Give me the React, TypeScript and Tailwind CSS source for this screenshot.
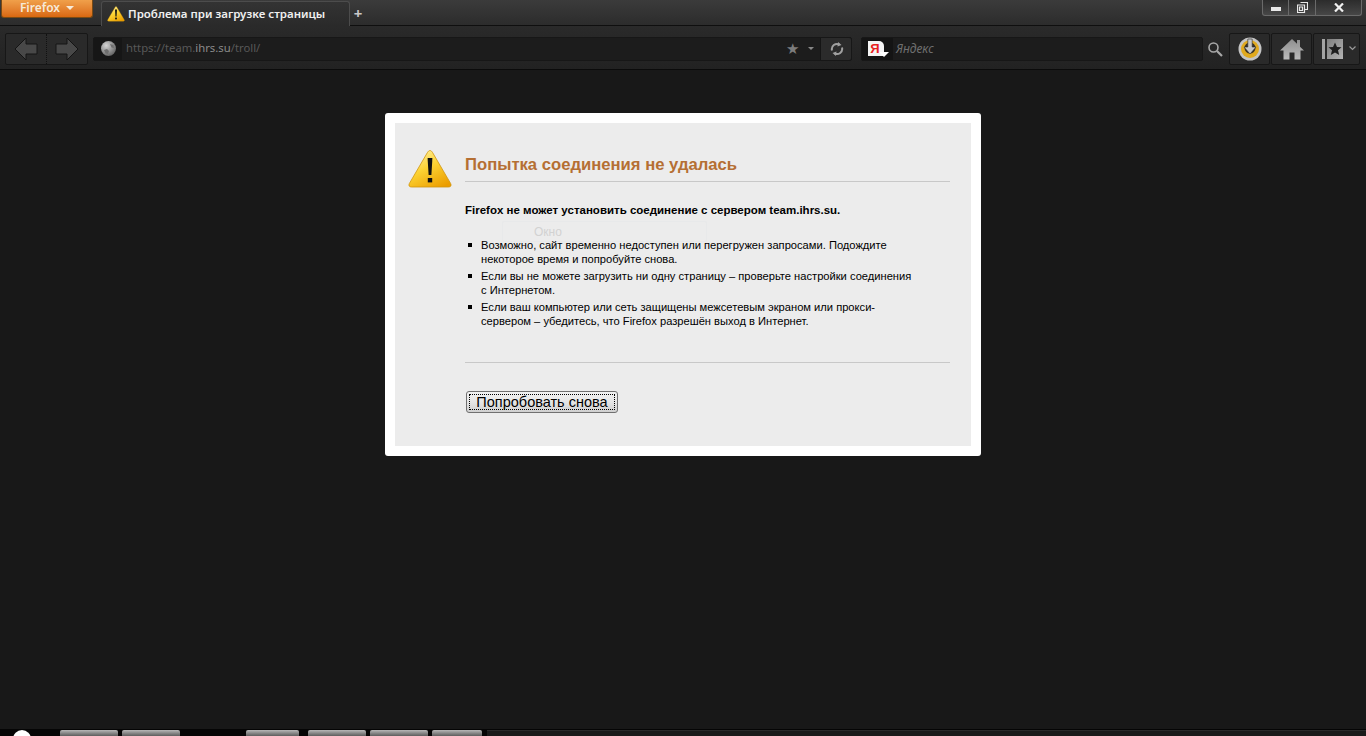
const uiFont = { fontFamily: '"Noto Sans", "DejaVu Sans", sans-serif' };

function Warning({ className, id }: { className: string; id: string }) {
  return (
    <svg viewBox="0 0 44 40" className={className}>
      <defs>
        <linearGradient id={id} x1="0.2" y1="0" x2="0.8" y2="1">
          <stop offset="0" stopColor="#fff0a0" />
          <stop offset="0.45" stopColor="#fcd232" />
          <stop offset="1" stopColor="#eb9d00" />
        </linearGradient>
      </defs>
      <path d="M22 1.5 C23 1.5 24 2.5 24.6 3.6 L42.6 34.4 C43.8 36.6 42.6 38 40.6 38 L3.4 38 C1.4 38 0.2 36.6 1.4 34.4 L19.4 3.6 C20 2.5 21 1.5 22 1.5Z" fill={`url(#${id})`} stroke="#d0960e" strokeWidth="0.8" />
      <path d="M19.6 9 H24.4 L23.4 26 H20.6Z" fill="#111" />
      <rect x="19.8" y="29" width="4.4" height="4.4" fill="#111" />
    </svg>
  );
}

function ArrowIcon({ flip }: { flip?: boolean }) {
  return (
    <svg width="24" height="26" viewBox="0 0 24 26" className={flip ? "-scale-x-100" : ""}>
      <path d="M1 13 L12 2 V8 H23 V18 H12 V24Z" fill="#484848" stroke="#141414" strokeWidth="1" />
    </svg>
  );
}

function TitleBar() {
  return (
    <div className="flex h-[26px] shrink-0 border-b border-[#0f0f0f] bg-gradient-to-b from-[#3b3b3b] to-[#2c2c2c]">
      <div
        style={uiFont}
        className="ml-[1px] flex h-[18px] w-[92px] items-center justify-center gap-[6px] rounded-b-[3px] border border-t-0 border-[#7a4a14] bg-gradient-to-b from-[#f0a04a] to-[#d9680f] pb-[2px] text-[12px] font-semibold text-[#f6ead8]"
      >
        Firefox
        <span className="mt-[1px] h-0 w-0 border-x-[4px] border-t-[4px] border-x-transparent border-t-[#f6ead8]" />
      </div>
      <div
        style={uiFont}
        className="ml-[8px] mt-[1px] flex h-[25px] w-[249px] items-center rounded-t-[3px] border border-b-0 border-[#4c4c4c] bg-gradient-to-b from-[#333333] to-[#2a2a2a] pl-[5px] text-[11.5px] font-semibold text-[#f0f0f0]"
      >
        <Warning id="tabWarn" className="h-[16px] w-[18px]" />
        <span className="ml-[3px] whitespace-nowrap">Проблема при загрузке страницы</span>
      </div>
      <span className="ml-[1px] mt-[3px] flex h-[20px] w-[14px] items-center justify-center text-[15px] font-bold leading-none text-[#c8c8c8]" style={uiFont}>
        +
      </span>
      <div className="ml-auto mr-[4px] flex h-[16px] rounded-b-[3px] border border-t-0 border-[#6a6a6a] bg-gradient-to-b from-[#2c2c2c] to-[#474747]">
        <div className="flex w-[26px] items-center justify-center border-r border-[#6a6a6a]">
          <span className="mt-[2px] h-[4px] w-[10px] bg-[#e8e8e8]" />
        </div>
        <div className="flex w-[27px] items-center justify-center border-r border-[#6a6a6a]">
          <svg width="11" height="11" viewBox="0 0 11 11">
            <path d="M3.5 0.5 H10.5 V7.5 H8 M0.5 3 H7.5 V10.5 H0.5Z M2.5 5 H5.5 V8.5 H2.5Z" fill="none" stroke="#e8e8e8" strokeWidth="1.2" />
          </svg>
        </div>
        <div className="flex w-[45px] items-center justify-center">
          <svg width="10" height="9" viewBox="0 0 10 9">
            <path d="M1 0.5 L9 8.5 M9 0.5 L1 8.5" stroke="#f0f0f0" strokeWidth="2.2" />
          </svg>
        </div>
      </div>
    </div>
  );
}

function NavBar() {
  return (
    <div className="flex h-[44px] shrink-0 items-center border-b border-[#0b0b0b] bg-gradient-to-b from-[#2a2a2a] to-[#222222] pt-[2px] pl-[5px]">
      <div className="flex h-[32px] w-[83px] rounded-[2px] border border-[#171717] bg-[#2a2a2a]">
        <div className="flex w-[41px] items-center justify-center border-r border-dotted border-[#111111]">
          <ArrowIcon />
        </div>
        <div className="flex flex-1 items-center justify-center">
          <ArrowIcon flip />
        </div>
      </div>
      <div className="ml-[5px] flex h-[24px] w-[759px] items-center rounded-[2px] border border-[#171717] bg-[#1c1c1c]">
        <div className="flex h-full w-[28px] items-center justify-center bg-[#161616]">
          <svg width="15" height="15" viewBox="0 0 15 15">
            <defs>
              <radialGradient id="globeFill" cx="0.35" cy="0.3" r="0.8">
                <stop offset="0" stopColor="#d4d4d4" />
                <stop offset="1" stopColor="#5a5a5a" />
              </radialGradient>
            </defs>
            <circle cx="7.5" cy="7.5" r="7.5" fill="url(#globeFill)" />
            <path d="M3 9 L6 8 L8 10 L7 13 L4.5 12.5Z M9 3 L12.5 4 L13 7 L10.5 6.5Z" fill="#6e6e6e" />
          </svg>
        </div>
        <span style={uiFont} className="ml-[4px] whitespace-nowrap text-[11.3px] text-[#585858]">
          https://team.<span className="text-[#8a8a8a]">ihrs.su</span>/troll/
        </span>
        <span className="ml-auto text-[15px] leading-none text-[#7c7c7c]">★</span>
        <span className="ml-[9px] mr-[6px] h-0 w-0 border-x-[3px] border-t-[3px] border-x-transparent border-t-[#888888]" />
        <div className="flex h-full w-[31px] items-center justify-center rounded-r-[2px] border-l border-[#151515] bg-[#2b2b2b]">
          <svg width="14" height="14" viewBox="0 0 14 14" fill="none" stroke="#a0a0a0" strokeWidth="2" className="ml-[1px]">
            <path d="M2 8.5 A5.2 5.2 0 0 1 9.5 2.6 M12 5.5 A5.2 5.2 0 0 1 4.5 11.4" />
            <path d="M8 0 L11.5 3 L7.5 4.5Z M6 14 L2.5 11 L6.5 9.5Z" fill="#a0a0a0" stroke="none" />
          </svg>
        </div>
      </div>
      <div className="ml-[9px] flex h-[24px] w-[342px] items-center rounded-[2px] border border-[#171717] bg-[#1c1c1c]">
        <div className="relative flex h-full w-[31px] items-center bg-[#141414] pl-[6px]">
          <span className="flex h-[15px] w-[16px] items-center justify-center rounded-tr-[5px] bg-[#f4f4f4] pr-[2px] text-[13px] font-bold leading-none text-[#e82020]" style={{ fontFamily: '"Liberation Sans", sans-serif' }}>
            Я
          </span>
          <span className="absolute left-[17px] top-[14px] h-0 w-0 border-x-[5px] border-t-[5px] border-x-transparent border-t-white" />
        </div>
        <span style={uiFont} className="ml-[3px] text-[12px] italic text-[#6f6f6f]">
          Яндекс
        </span>
      </div>
      <svg width="16" height="16" viewBox="0 0 16 16" fill="none" stroke="#a8a8a8" className="ml-[4px]">
        <circle cx="6.5" cy="6.5" r="4.5" strokeWidth="1.6" />
        <path d="M10 10 L15 15" strokeWidth="2.2" />
      </svg>
      <div className="ml-[6px] flex h-[32px] w-[41px] items-center justify-center rounded-[2px] border border-[#171717] bg-[#2a2a2a]">
        <svg width="24" height="24" viewBox="0 0 24 24">
          <circle cx="12" cy="12" r="11.5" fill="#c4c4c4" />
          <circle cx="12" cy="12" r="9" fill="#e0a91e" />
          <circle cx="12" cy="11" r="5.5" fill="#3a3226" />
          <path d="M9.8 2 H14.2 V10 H18 L12 17 L6 10 H9.8Z" fill="#c8c8c8" stroke="#2a2a2a" strokeWidth="0.6" />
        </svg>
      </div>
      <div className="ml-[1px] flex h-[32px] w-[41px] items-center justify-center rounded-[2px] border border-[#171717] bg-[#2a2a2a]">
        <svg width="24" height="22" viewBox="0 0 24 22">
          <defs>
            <linearGradient id="homeFill" x1="0" y1="0" x2="0" y2="1">
              <stop offset="0" stopColor="#8e8e8e" />
              <stop offset="1" stopColor="#bcbcbc" />
            </linearGradient>
          </defs>
          <path d="M12 1 L17 5.8 V2 H20 V8.7 L24 12.5 H20.5 V21.5 H14.5 V14.5 H9.5 V21.5 H3.5 V12.5 H0Z" fill="url(#homeFill)" />
        </svg>
      </div>
      <div className="ml-[1px] flex h-[32px] w-[47px] items-center rounded-[2px] border border-[#171717] bg-[#2a2a2a] pl-[8px]">
        <svg width="21" height="20" viewBox="0 0 21 20">
          <defs>
            <linearGradient id="bookFill" x1="0" y1="0" x2="1" y2="1">
              <stop offset="0" stopColor="#7e7e7e" />
              <stop offset="1" stopColor="#b4b4b4" />
            </linearGradient>
          </defs>
          <rect x="0" y="0" width="3" height="20" fill="#a4a4a4" />
          <rect x="5" y="0" width="16" height="20" fill="url(#bookFill)" />
          <path d="M13 3.5 L15 8 L19.5 8.3 L16 11.3 L17.2 16 L13 13.4 L8.8 16 L10 11.3 L6.5 8.3 L11 8Z" fill="#1e1e1e" />
        </svg>
        <svg width="7" height="5" viewBox="0 0 7 5" fill="none" stroke="#9a9a9a" strokeWidth="1.2" className="ml-[6px]">
          <path d="M0.5 0.5 L3.5 3.5 L6.5 0.5" />
        </svg>
      </div>
    </div>
  );
}

function ErrorCard() {
  return (
    <div style={{ fontFamily: '"Liberation Sans", Arial, sans-serif' }} className="relative mx-auto h-[343px] w-[596px] rounded-[3px] bg-white p-[10px]">
      <div className="relative flex h-full bg-[#ececec]">
        <div className="absolute left-[107px] top-[98px] flex h-[21px] w-[205px] items-center rounded-[2px] border border-[#e8e9ea] pl-[31px] text-[12px] text-[#d2d2d2]">
          Окно
        </div>
        <Warning id="pageWarn" className="relative ml-[13px] mt-[26px] h-[40px] w-[44px] shrink-0" />
        <div className="relative ml-[13px] w-[485px]">
          <h1 className="mt-[32px] h-[27px] border-b border-[#c8c8c8] text-[16.65px] font-bold leading-[19px] text-[#b56f33]">
            Попытка соединения не удалась
          </h1>
          <p className="mt-[22px] text-[11.5px] font-bold leading-[13px] text-black">
            Firefox не может установить соединение с сервером team.ihrs.su.
          </p>
          <ul className="mt-[21px] h-[123px] w-[450px] text-[11.15px] leading-[14px] text-black">
            <li className="mb-[3px] flex">
              <span className="ml-[3px] mr-[9px] mt-[5px] h-[4px] w-[4px] shrink-0 bg-black" />
              <span>
                Возможно, сайт временно недоступен или перегружен запросами. Подождите<br />
                некоторое время и попробуйте снова.
              </span>
            </li>
            <li className="mb-[3px] flex">
              <span className="ml-[3px] mr-[9px] mt-[5px] h-[4px] w-[4px] shrink-0 bg-black" />
              <span>
                Если вы не можете загрузить ни одну страницу – проверьте настройки соединения<br />
                с Интернетом.
              </span>
            </li>
            <li className="flex">
              <span className="ml-[3px] mr-[9px] mt-[5px] h-[4px] w-[4px] shrink-0 bg-black" />
              <span>
                Если ваш компьютер или сеть защищены межсетевым экраном или прокси-<br />
                сервером – убедитесь, что Firefox разрешён выход в Интернет.
              </span>
            </li>
          </ul>
          <div className="mt-[1px] border-t border-[#c8c8c8]" />
          <button className="ml-[1px] mt-[28px] flex h-[22px] w-[152px] items-center justify-center rounded-[3px] border border-[#707070] bg-gradient-to-b from-[#f2f2f2] via-[#e6e6e6] to-[#cfcfcf] p-[2px]">
            <span className="flex h-full w-full items-center justify-center border border-dotted border-black pt-[1px] text-[14.5px] leading-none text-black">
              Попробовать снова
            </span>
          </button>
        </div>
      </div>
    </div>
  );
}

function TaskBar() {
  const buttons = [
    "ml-[29px] w-[58px]",
    "ml-[4px] w-[58px]",
    "ml-[66px] w-[53px]",
    "ml-[9px] w-[58px]",
    "ml-[4px] w-[58px]",
    "ml-[4px] w-[50px]",
  ];
  return (
    <div className="flex h-[7px] shrink-0 overflow-hidden bg-[#050505]">
      <span className="ml-[13px] mt-[1px] h-[18px] w-[18px] shrink-0 rounded-full bg-white" />
      {buttons.map((width, i) => (
        <span key={i} className={`${width} mt-[1px] shrink-0 rounded-t-[2px] bg-gradient-to-b from-[#b8b8b8] to-[#5e5e5e]`} />
      ))}
      <div className="ml-[5px] mt-[1px] flex-1 border-t border-[#2a2a2a] bg-[#1a1a1a]" />
    </div>
  );
}

export default function App() {
  return (
    <div className="flex h-[736px] w-[1366px] flex-col overflow-hidden bg-[#181818]">
      <TitleBar />
      <NavBar />
      <div className="flex-1 pt-[43px]">
        <ErrorCard />
      </div>
      <TaskBar />
    </div>
  );
}
